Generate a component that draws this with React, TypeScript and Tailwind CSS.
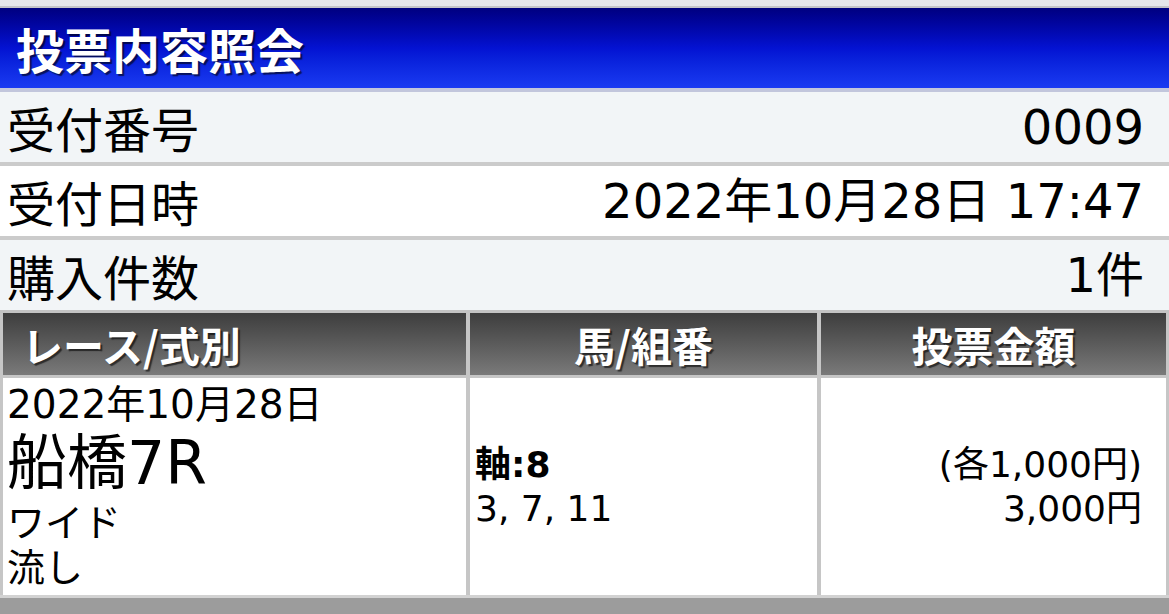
import React from 'react';

const jp = "font-['Noto_Sans_CJK_JP',sans-serif]";
const mixed = "font-['DejaVu_Sans','Noto_Sans_CJK_JP',sans-serif]";

const summary = [
  { label: '受付番号', value: '0009', bg: 'bg-[#f2f5f7]' },
  { label: '受付日時', value: '2022年10月28日 17:47', bg: 'bg-white' },
  { label: '購入件数', value: '1件', bg: 'bg-[#f2f5f7]' },
];

const App = () => {
  return (
    <div className={`w-[1169px] h-[614px] overflow-hidden bg-[#9c9c9c] text-black ${jp}`}>
      {/* top strip */}
      <div className="h-[6px] bg-[#e6e6ea]" />
      <div className="h-[2px] bg-[#c4c4c8]" />

      {/* title bar */}
      <div className="h-[80px] flex items-center pl-[16px] bg-gradient-to-b from-[#000080] via-[#0412d2] to-[#1a3af2]">
        <h1 className="text-white font-bold text-[48px] leading-none [text-shadow:2px_2px_1px_rgba(0,0,0,0.6)]">
          投票内容照会
        </h1>
      </div>
      <div className="h-[4px] bg-[#c2c6dc]" />

      {/* summary rows */}
      {summary.map((row, i) => (
        <div key={row.label}>
          <div className={`h-[70px] flex items-center justify-between pl-[7px] pr-[25px] ${row.bg}`}>
            <span className="text-[48px] leading-none">{row.label}</span>
            <span className={`text-[48px] leading-none ${mixed}`}>{row.value}</span>
          </div>
          <div className={i < 2 ? 'h-[4px] bg-[#cbcbcb]' : 'h-[3px] bg-[#c4c4c4]'} />
        </div>
      ))}

      {/* bet table */}
      <div className="grid grid-cols-[463px_347px_345px] gap-x-[4px] px-[3px] bg-[#c6c6c6]">
        <div className="h-[62px] flex items-center pl-[19px] bg-gradient-to-b from-[#3e3e3e] to-[#7a7a7a]">
          <span className="text-white font-bold text-[41px] leading-none [text-shadow:2px_2px_1px_rgba(0,0,0,0.6)]">レース/式別</span>
        </div>
        <div className="h-[62px] flex items-center justify-center bg-gradient-to-b from-[#3e3e3e] to-[#7a7a7a]">
          <span className="text-white font-bold text-[41px] leading-none [text-shadow:2px_2px_1px_rgba(0,0,0,0.6)]">馬/組番</span>
        </div>
        <div className="h-[62px] flex items-center justify-center bg-gradient-to-b from-[#3e3e3e] to-[#7a7a7a]">
          <span className="text-white font-bold text-[41px] leading-none [text-shadow:2px_2px_1px_rgba(0,0,0,0.6)]">投票金額</span>
        </div>

        <div className="col-span-3 h-[3px]" />

        {/* race cell */}
        <div className={`h-[217px] bg-white pl-[4px] pt-[6px] flex flex-col ${mixed}`}>
          <div className="text-[39px] leading-[42px]">2022年10月28日</div>
          <div className="text-[60px] leading-[74px]">船橋7R</div>
          <div className="text-[38px] leading-[46px]">ワイド</div>
          <div className="text-[38px] leading-[44px]">流し</div>
        </div>

        {/* horse cell */}
        <div className={`h-[217px] bg-white pl-[5px] flex flex-col justify-center ${mixed}`}>
          <div className="text-[36px] leading-[44px] font-bold">軸:8</div>
          <div className="text-[36px] leading-[44px]">3, 7, 11</div>
        </div>

        {/* amount cell */}
        <div className={`h-[217px] bg-white pr-[24px] flex flex-col justify-center items-end ${mixed}`}>
          <div className="text-[36px] leading-[44px]">(各1,000円)</div>
          <div className="text-[36px] leading-[44px]">3,000円</div>
        </div>
      </div>
      <div className="h-[3px] bg-[#d2d2d2]" />
    </div>
  );
};

export default App;
